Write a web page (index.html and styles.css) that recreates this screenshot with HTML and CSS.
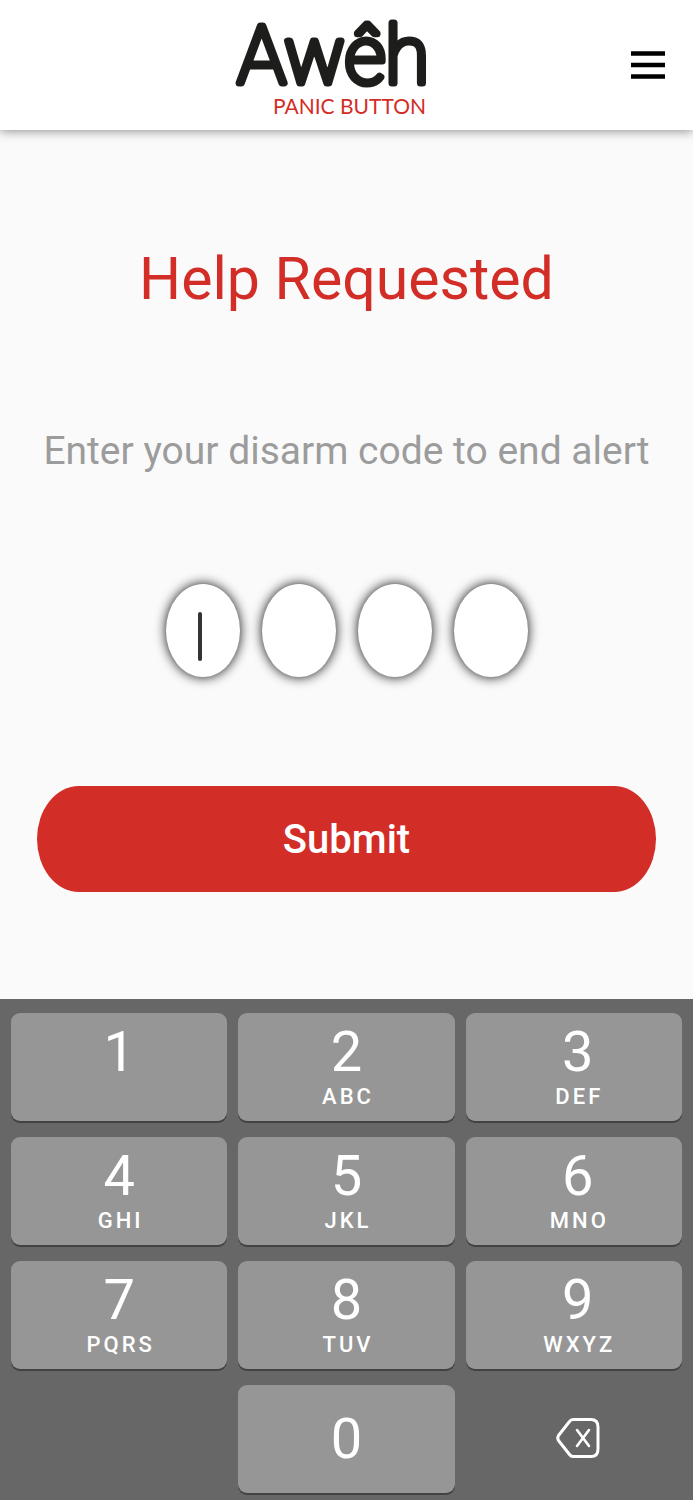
FILE: index.html
```html
<!DOCTYPE html>
<html lang="en">
<head>
    <meta charset="UTF-8">
    <meta name="viewport" content="width=device-width, initial-scale=1.0">
    <title>Awêh Panic Button</title>
    <link rel="stylesheet" href="styles.css">
</head>
<body>
    <header class="topbar">
        <a href="#" class="logo">
            <svg width="220" height="130" viewBox="0 0 220 130">
                <text class="logo-name" x="212" y="83" text-anchor="end">Awêh</text>
                <text class="logo-sub" x="209" y="114" text-anchor="end">PANIC BUTTON</text>
            </svg>
        </a>
        <button type="button" class="menu-btn" aria-label="Menu">
            <svg width="34" height="30" viewBox="0 0 34 30">
                <path d="M0 3.5h34M0 15h34M0 26.5h34" stroke="#000" stroke-width="4.5"/>
            </svg>
        </button>
    </header>

    <main>
        <h1>Help Requested</h1>
        <form class="disarm">
            <p>Enter your disarm code to end alert</p>
            <div class="code">
                <div class="slot">
                    <input type="text" inputmode="numeric" maxlength="1" aria-label="Digit 1">
                    <span class="caret"></span>
                </div>
                <div class="slot"><input type="text" inputmode="numeric" maxlength="1" aria-label="Digit 2"></div>
                <div class="slot"><input type="text" inputmode="numeric" maxlength="1" aria-label="Digit 3"></div>
                <div class="slot"><input type="text" inputmode="numeric" maxlength="1" aria-label="Digit 4"></div>
            </div>
            <button type="submit" class="submit">Submit</button>
        </form>
    </main>

    <div class="keypad">
        <button type="button" class="key">1<small></small></button>
        <button type="button" class="key">2<small>ABC</small></button>
        <button type="button" class="key right">3<small>DEF</small></button>
        <button type="button" class="key">4<small>GHI</small></button>
        <button type="button" class="key">5<small>JKL</small></button>
        <button type="button" class="key right">6<small>MNO</small></button>
        <button type="button" class="key">7<small>PQRS</small></button>
        <button type="button" class="key">8<small>TUV</small></button>
        <button type="button" class="key right">9<small>WXYZ</small></button>
        <button type="button" class="key zero">0</button>
        <button type="button" class="key right delete" aria-label="Delete">
            <svg width="46" height="42" viewBox="0 0 46 42" fill="none" stroke="#fff" stroke-width="3" stroke-linecap="round" stroke-linejoin="round">
                <path d="M18 1.5H36Q43 1.5 43 9V31Q43 38.500 36 38.500H18Q16 38.500 14.500 36.500L3.500 22.500Q2 20 3.500 17.500L14.500 3.500Q16 1.500 18 1.500Z"/>
                <path d="M22 12L34 28M34 12L22 28" stroke-width="2.600"/>
            </svg>
        </button>
    </div>
</body>
</html>
```
FILE: styles.css
```css
* {
    box-sizing: border-box;
}
body {
    margin: 0;
    min-height: 100vh;
    display: flex;
    flex-direction: column;
    background-color: #fafafa;
    font-family: Roboto, "Liberation Sans", sans-serif;
}
button {
    border: none;
    padding: 0;
    font-family: inherit;
    cursor: pointer;
}

/* header */
.topbar {
    display: grid;
    grid-template-columns: 1fr auto 1fr;
    align-items: center;
    height: 130px;
    padding: 0 28px;
    background-color: #fff;
    box-shadow: 0 1px 10px rgba(0, 0, 0, 0.45);
}
.logo {
    grid-column: 2;
    margin-right: 40px;
}
.logo svg {
    display: block;
}
/* thin weight + round stroke gives the soft letter ends */
.logo-name {
    font-size: 80px;
    font-weight: 100;
    fill: #1d1d1b;
    stroke: #1d1d1b;
    stroke-width: 7px;
    stroke-linejoin: round;
}
.logo-sub {
    font-family: Lato, sans-serif;
    font-size: 21px;
    fill: #d22d27;
}
.menu-btn {
    justify-self: end;
    background: none;
}
.menu-btn svg {
    display: block;
}

/* disarm form */
main {
    flex: 1;
    padding: 109px 37px 0;
    text-align: center;
}
h1 {
    margin: 0;
    font-size: 59px;
    line-height: 80px;
    font-weight: 400;
    color: #d22d27;
}
.disarm p {
    margin: 102px -20px 0;
    font-size: 39px;
    line-height: 60px;
    color: #9c9c9c;
}
.code {
    display: flex;
    justify-content: center;
    gap: 22px;
    margin-top: 103px;
}
.slot {
    position: relative;
    width: 74px;
    height: 93px;
}
.slot input {
    width: 100%;
    height: 100%;
    padding: 0;
    border: none;
    border-radius: 50%;
    outline: none;
    background-color: #fff;
    box-shadow: 0 0 12px rgba(0, 0, 0, 0.95);
    font-size: 39px;
    text-align: center;
}
.caret {
    position: absolute;
    left: 32px;
    top: 28px;
    width: 4px;
    height: 49px;
    border-radius: 2px;
    background-color: #333;
}
.submit {
    display: block;
    width: 100%;
    height: 106px;
    margin: 109px 0 0;
    border-radius: 42px / 53px;
    background-color: #d22d27;
    color: #fff;
    font-size: 40px;
    font-weight: 500;
}

/* keypad */
.keypad {
    display: grid;
    grid-template-columns: repeat(3, 1fr);
    gap: 16px 11px;
    padding: 14px 11px 7px;
    background-color: #676767;
}
.key {
    display: flex;
    flex-direction: column;
    align-items: center;
    height: 108px;
    padding-top: 11px;
    border-radius: 9px;
    background-color: #969696;
    box-shadow: 0 2px 0 #424242;
    color: #fff;
    font-size: 56px;
    line-height: 56px;
}
.key small {
    padding-left: 3px;
    font-size: 22px;
    line-height: 34px;
    font-weight: 500;
    letter-spacing: 3px;
}
.right {
    padding-left: 8px;
}
.zero {
    grid-column: 2;
    justify-content: center;
    padding-top: 0;
}
.delete {
    justify-content: center;
    padding-top: 0;
    background: none;
    box-shadow: none;
}
```
